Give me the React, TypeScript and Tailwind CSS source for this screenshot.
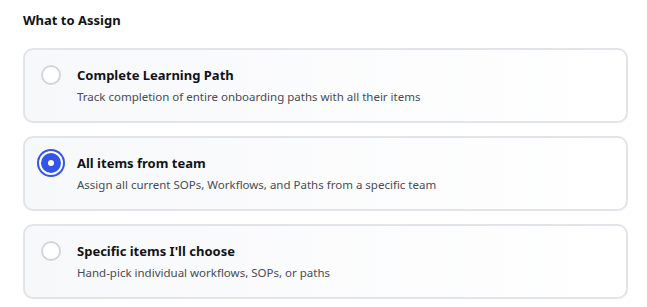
import React, { useState } from 'react';

const options = [
  {
    id: 'path',
    title: 'Complete Learning Path',
    description: 'Track completion of entire onboarding paths with all their items',
  },
  {
    id: 'team',
    title: 'All items from team',
    description: 'Assign all current SOPs, Workflows, and Paths from a specific team',
  },
  {
    id: 'specific',
    title: "Specific items I'll choose",
    description: 'Hand-pick individual workflows, SOPs, or paths',
  },
];

const App: React.FC = () => {
  const [selected, setSelected] = useState('team');

  return (
    <div className="w-[647px] h-[307px] bg-white pl-[23px] pr-[19px] pt-[11px] font-['Noto_Sans',sans-serif]">
      <h2 className="text-[13px] leading-[18px] font-bold text-[#111318]">What to Assign</h2>

      <div className="mt-[19px] flex flex-col gap-[13px]">
        {options.map((opt) => {
          const active = selected === opt.id;
          return (
            <button
              key={opt.id}
              onClick={() => setSelected(opt.id)}
              className="h-[75px] w-full text-left rounded-[10px] border-2 border-[#e3e4ea] bg-gradient-to-r from-[#f7f8fa] to-white px-[16px] pt-[16px] flex items-start gap-[16px]"
            >
              {active ? (
                <span className="mt-[-1px] w-[20px] h-[20px] shrink-0 rounded-full bg-[#3355e8] ring-2 ring-[#3355e8] ring-offset-2 ring-offset-white flex items-center justify-center">
                  <span className="w-[6px] h-[6px] rounded-full bg-white" />
                </span>
              ) : (
                <span className="mt-[-1px] w-[20px] h-[20px] shrink-0 rounded-full border-2 border-[#d4d5dc] bg-white" />
              )}
              <span className="flex flex-col">
                <span className="text-[13px] leading-[18px] font-bold text-[#111318]">{opt.title}</span>
                <span className="mt-[5px] text-[11.5px] leading-[16px] text-[#474b57]">{opt.description}</span>
              </span>
            </button>
          );
        })}
      </div>
    </div>
  );
};

export default App;
